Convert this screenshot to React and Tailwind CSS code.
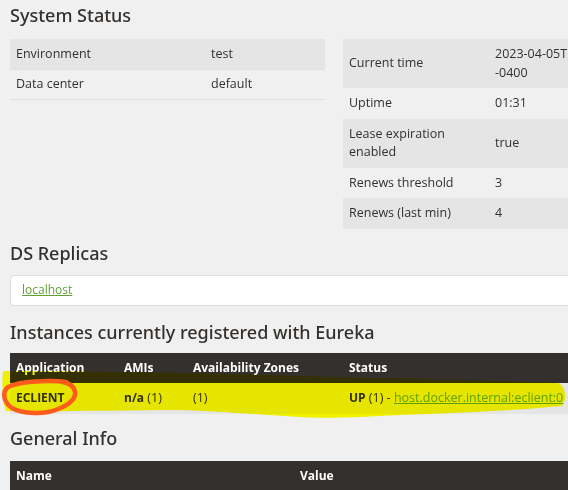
import React from 'react'

const heading = 'font-["Noto_Sans",sans-serif] text-[18px] font-medium leading-[22px] text-[#34302d]'

const rightRows = [
  { label: 'Current time', value: '2023-04-05T13:12:45 -0400', shaded: true },
  { label: 'Uptime', value: '01:31' },
  { label: 'Lease expiration enabled', value: 'true', shaded: true },
  { label: 'Renews threshold', value: '3' },
  { label: 'Renews (last min)', value: '4', shaded: true },
]

// marker strokes drawn over the instances row
function Highlight() {
  return (
    <>
      <svg
        className="pointer-events-none absolute left-0 top-[365px] mix-blend-multiply"
        width="568"
        height="60"
        viewBox="0 365 568 60"
      >
        <path
          d="M3 371 C 80 371, 200 373, 300 376 C 420 379, 520 381, 558 383 C 566 386, 567 400, 562 406 C 520 410, 460 413, 400 415 C 360 417, 330 419, 300 417 C 260 415, 220 411, 180 410 C 120 410, 60 412, 6 411 C 2 400, 2 380, 3 371 Z"
          fill="#ffff00"
        />
      </svg>
      <svg
        className="pointer-events-none absolute left-0 top-[365px]"
        width="568"
        height="60"
        viewBox="0 365 568 60"
      >
        <path
          d="M66 382 C 50 380, 20 381, 8 387 C 2 392, 3 402, 12 408 C 22 414, 45 415, 58 409 C 68 405, 76 399, 75 392 C 74 386, 70 383, 62 382"
          fill="none"
          stroke="#ff5b1c"
          strokeWidth="4.5"
          strokeLinecap="round"
        />
      </svg>
    </>
  )
}

export default function App() {
  return (
    <div className='relative h-[490px] w-full overflow-hidden bg-[#f0f0f0] font-["Open_Sans",sans-serif] text-[12.5px] text-[#34302d]'>
      <div className="w-[680px] px-[10px]">
        <h2 className={`${heading} h-[39px] pt-[4px]`}>System Status</h2>

        <div className="flex items-start gap-[18px]">
          <table className="w-[315px] border-collapse">
            <tbody>
              <tr className="bg-[#e5e5e5]">
                <td className="h-[30px] w-[201px] px-[6px] leading-[18px]">Environment</td>
                <td className="leading-[18px]">test</td>
              </tr>
              <tr className="border-y border-[#dde0e4]">
                <td className="h-[30px] px-[6px] leading-[18px]">Data center</td>
                <td className="leading-[18px]">default</td>
              </tr>
            </tbody>
          </table>

          <table className="w-[315px] border-collapse">
            <tbody>
              {rightRows.map((row) => (
                <tr key={row.label} className={row.shaded ? 'bg-[#e5e5e5]' : ''}>
                  <td className="w-[146px] px-[6px] py-[6px] align-middle leading-[18.5px]">
                    {row.label}
                  </td>
                  <td className="px-[6px] py-[6px] align-middle leading-[18.5px]">{row.value}</td>
                </tr>
              ))}
            </tbody>
          </table>
        </div>

        <h2 className={`${heading} h-[46px] pt-[13px]`}>DS Replicas</h2>
        <div className="flex h-[31px] items-center rounded-[4px] border border-[#dddddd] bg-white px-[11px]">
          <a href="#" className="text-[12px] text-[#5fa134] underline">
            localhost
          </a>
        </div>

        <h2 className={`${heading} h-[47px] pt-[15px]`}>Instances currently registered with Eureka</h2>
        <table className="w-full border-collapse">
          <thead>
            <tr className="bg-[#34302d] text-left text-[12px] font-bold text-white">
              <th className="h-[30px] w-[108px] px-[6px]">Application</th>
              <th className="w-[69px] px-[6px]">AMIs</th>
              <th className="w-[156px] px-[6px]">Availability Zones</th>
              <th className="px-[6px]">Status</th>
            </tr>
          </thead>
          <tbody>
            <tr className="bg-[#e5e5e5]">
              <td className="h-[31px] px-[6px] text-[12px] font-bold">ECLIENT</td>
              <td className="px-[6px]">
                <b className="text-[12px]">n/a</b> (1)
              </td>
              <td className="px-[6px]">(1)</td>
              <td className="px-[6px]">
                <b className="text-[12px]">UP</b> (1) -{' '}
                <a href="#" className="text-[#5fa134] underline">
                  host.docker.internal:eclient:0
                </a>
              </td>
            </tr>
          </tbody>
        </table>

        <h2 className={`${heading} h-[47px] pt-[13px]`}>General Info</h2>
        <table className="w-full border-collapse">
          <thead>
            <tr className="bg-[#34302d] text-left text-[12px] font-bold text-white">
              <th className="h-[30px] w-[284px] px-[6px]">Name</th>
              <th className="px-[6px]">Value</th>
            </tr>
          </thead>
        </table>
      </div>
      <Highlight />
    </div>
  )
}
